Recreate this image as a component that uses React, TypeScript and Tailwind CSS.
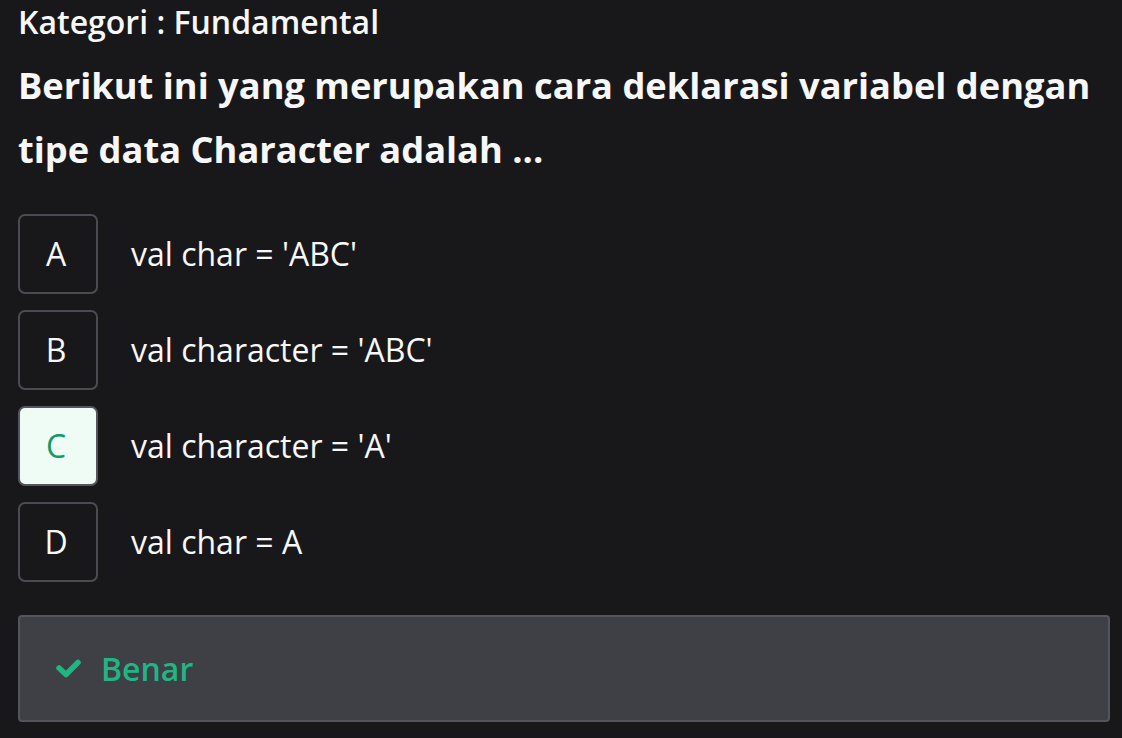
const options = [
  { key: 'A', text: "val char = 'ABC'" },
  { key: 'B', text: "val character = 'ABC'" },
  { key: 'C', text: "val character = 'A'", correct: true },
  { key: 'D', text: 'val char = A' },
];

function CheckIcon() {
  return (
    <svg width="25" height="19" viewBox="0 0 25 19" fill="none">
      <polyline
        points="3,9 10,15.5 22,3.5"
        stroke="#22b584"
        strokeWidth="5.5"
        strokeLinecap="round"
        strokeLinejoin="round"
      />
    </svg>
  );
}

export default function App() {
  return (
    <div
      className="min-h-[738px] bg-[#18181b] pl-[18px] pr-[12px] text-[#f7f7f8]"
      style={{ fontFamily: '"Open Sans", "Noto Sans", sans-serif' }}
    >
      <div className="text-[32px] font-semibold leading-[44px]">Kategori : Fundamental</div>

      <h1 className="mt-[9px] text-[36.25px] font-bold leading-[64px]">
        Berikut ini yang merupakan cara deklarasi variabel dengan
        <br />
        tipe data Character adalah ...
      </h1>

      <div className="mt-[33px] flex flex-col gap-[16px]">
        {options.map((opt) => (
          <div key={opt.key} className="flex items-center gap-[33px]">
            <div
              className={
                opt.correct
                  ? 'flex h-[80px] w-[80px] items-center justify-center rounded-[7px] border-2 border-[#55555d] bg-[#effcf6] pr-[4px] text-[32px] text-[#139a69]'
                  : 'flex h-[80px] w-[80px] items-center justify-center rounded-[7px] border-2 border-[#4b4b53] bg-[#18181b] pr-[4px] text-[32px] text-[#f7f7f8]'
              }
            >
              {opt.key}
            </div>
            <div className="text-[32px]">{opt.text}</div>
          </div>
        ))}
      </div>

      <div className="mt-[33px] flex h-[107px] items-center gap-[20px] rounded-[4px] border-2 border-[#54545c] bg-[#3f3f46] pl-[36px]">
        <CheckIcon />
        <span className="text-[32px] font-semibold text-[#22b584]">Benar</span>
      </div>
    </div>
  );
}
